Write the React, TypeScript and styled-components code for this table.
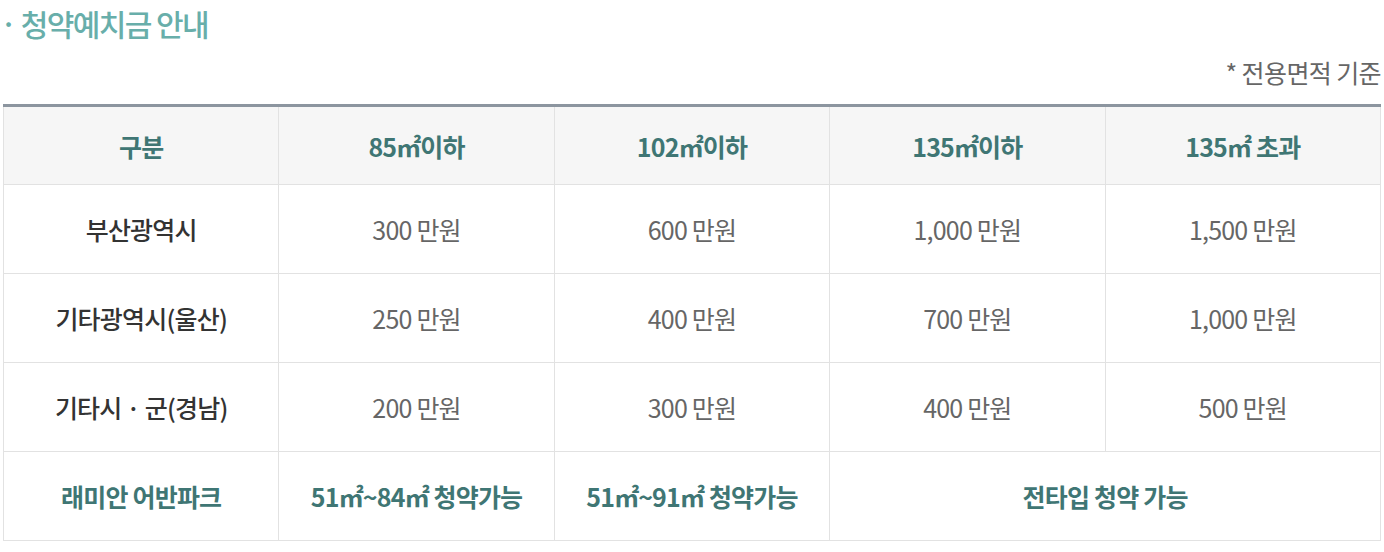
import React from "react";
import styled, { createGlobalStyle } from "styled-components";

const Global = createGlobalStyle`
  html, body { margin: 0; padding: 0; background: #fff; }
  body { font-family: "Noto Sans CJK KR", "Noto Sans", sans-serif; }
`;

const Page = styled.div`
  width: 1384px;
  padding: 0 3px;
  box-sizing: border-box;
`;

const Title = styled.h2`
  margin: 0 0 0 -3px;
  padding: 3px 0 0 0;
  font-size: 30px;
  line-height: 40px;
  font-weight: 500;
  letter-spacing: -1.6px;
  color: #68aeaa;
`;

const Note = styled.p`
  margin: 13px 0 0 0;
  text-align: right;
  font-size: 25px;
  line-height: 32px;
  color: #666;
  letter-spacing: -0.6px;
`;

const Table = styled.table`
  margin-top: 16px;
  width: 100%;
  border-collapse: collapse;
  table-layout: fixed;
  border-top: 3px solid #8c959f;
`;

const Unit = styled.span`
  letter-spacing: -3px;
  margin-right: 2px;
`;

const Cell = styled.td<{ $tone: "head" | "label" | "value" | "accent" }>`
  border: 1px solid #e2e2e2;
  text-align: center;
  vertical-align: middle;
  font-size: 25px;
  letter-spacing: -0.8px;
  height: ${(p) => (p.$tone === "head" ? "77px" : "88px")};
  padding: 0;
  background: ${(p) => (p.$tone === "head" ? "#f6f6f6" : "#fff")};
  color: ${(p) =>
    p.$tone === "head" || p.$tone === "accent"
      ? "#3f7674"
      : p.$tone === "label"
      ? "#333"
      : "#666"};
  font-weight: ${(p) => (p.$tone === "value" ? 400 : p.$tone === "label" ? 500 : 600)};
`;

const M2 = () => <Unit>㎡</Unit>;

const heads: React.ReactNode[] = [
  "구분",
  <>85<M2 />이하</>,
  <>102<M2 />이하</>,
  <>135<M2 />이하</>,
  <>135<M2 /> 초과</>,
];
const rows: [string, string[]][] = [
  ["부산광역시", ["300 만원", "600 만원", "1,000 만원", "1,500 만원"]],
  ["기타광역시(울산)", ["250 만원", "400 만원", "700 만원", "1,000 만원"]],
  ["기타시 · 군(경남)", ["200 만원", "300 만원", "400 만원", "500 만원"]],
];

export default function App() {
  return (
    <>
      <Global />
      <Page>
        <Title>· 청약예치금 안내</Title>
        <Note>* 전용면적 기준</Note>
        <Table>
          <thead>
            <tr>
              {heads.map((h, i) => (
                <Cell as="th" key={i} $tone="head">
                  {h}
                </Cell>
              ))}
            </tr>
          </thead>
          <tbody>
            {rows.map(([label, vals]) => (
              <tr key={label}>
                <Cell $tone="label">{label}</Cell>
                {vals.map((v, i) => (
                  <Cell key={i} $tone="value">
                    {v}
                  </Cell>
                ))}
              </tr>
            ))}
            <tr>
              <Cell $tone="accent">래미안 어반파크</Cell>
              <Cell $tone="accent">51<M2 />~84<M2 /> 청약가능</Cell>
              <Cell $tone="accent">51<M2 />~91<M2 /> 청약가능</Cell>
              <Cell $tone="accent" colSpan={2}>
                전타입 청약 가능
              </Cell>
            </tr>
          </tbody>
        </Table>
      </Page>
    </>
  );
}
